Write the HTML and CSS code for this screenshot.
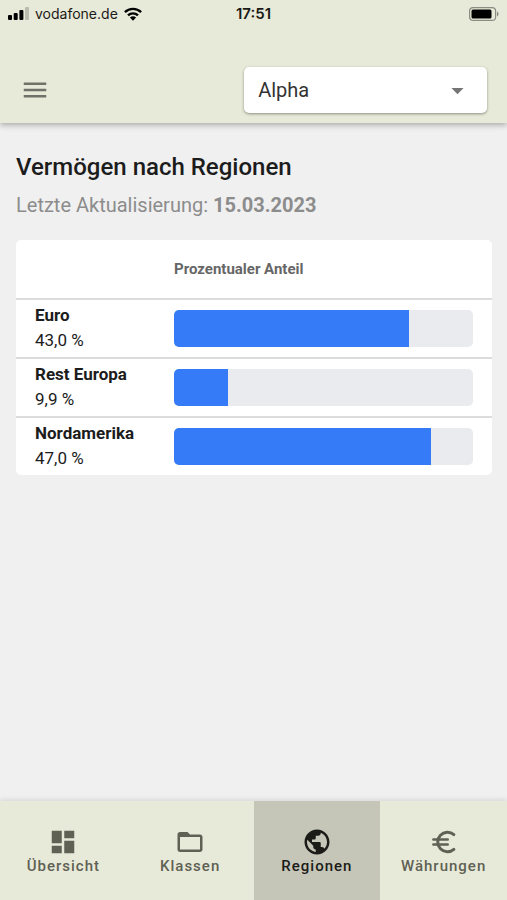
FILE: index.html
```html
<!DOCTYPE html>
<html lang="de">
<head>
<meta charset="utf-8">
<meta name="viewport" content="width=device-width, initial-scale=1">
<title>Vermögen nach Regionen</title>
<link rel="stylesheet" href="styles.css">
</head>
<body>
<header class="top">
  <div class="status">
    <div class="carrier">
      <svg class="signal" viewBox="0 0 21 13" aria-hidden="true"><rect x="0" y="8" width="4" height="5" rx="1"/><rect x="5.7" y="6" width="4" height="7" rx="1"/><rect x="11.4" y="3" width="4" height="10" rx="1"/><rect x="17" y="0" width="4" height="13" rx="1" opacity=".2"/></svg>
      <span>vodafone.de</span>
      <svg class="wifi" viewBox="0 0 18 14" aria-hidden="true"><g fill="none" stroke="#000" stroke-width="2.4"><path d="M.9 5.2a11.6 11.6 0 0 1 16.2 0"/><path d="M4 8.4a7.2 7.2 0 0 1 10 0"/></g><path d="M9 13.8 5.9 10.6a4.5 4.5 0 0 1 6.2 0z"/></svg>
    </div>
    <span class="time">17:51</span>
    <svg class="battery" viewBox="0 0 30 14" aria-hidden="true"><rect x=".6" y=".6" width="26" height="12.8" rx="3.5" fill="none" stroke="#000" stroke-opacity=".4" stroke-width="1.2"/><rect x="2.5" y="2.5" width="20" height="9" rx="1.5"/><path d="M28 4.500c2 .8 2 4.200 0 5z" opacity=".4"/></svg>
  </div>
  <div class="toolbar">
    <button class="menu" type="button" aria-label="Menü"><svg class="icon" viewBox="0 0 24 24" aria-hidden="true"><path d="M3 18h18v-2H3v2zm0-5h18v-2H3v2zm0-7v2h18V6H3z"/></svg></button>
    <div class="picker">
      <select class="select" aria-label="Portfolio"><option>Alpha</option></select>
      <svg class="arrow" viewBox="0 0 24 24" aria-hidden="true"><path d="M7 10l5 5 5-5z"/></svg>
    </div>
  </div>
</header>
<main class="content">
  <h1 class="title">Vermögen nach Regionen</h1>
  <p class="updated">Letzte Aktualisierung: <strong>15.03.2023</strong></p>
  <table class="regions">
    <thead>
      <tr><td class="label"></td><th class="share" scope="col">Prozentualer Anteil</th></tr>
    </thead>
    <tbody>
      <tr><th class="label" scope="row">Euro<span class="value">43,0 %</span></th><td class="share"><div class="track"><div class="fill" style="width:78.7%"></div></div></td></tr>
      <tr><th class="label" scope="row">Rest Europa<span class="value">9,9 %</span></th><td class="share"><div class="track"><div class="fill" style="width:18.1%"></div></div></td></tr>
      <tr><th class="label" scope="row">Nordamerika<span class="value">47,0 %</span></th><td class="share"><div class="track"><div class="fill" style="width:86%"></div></div></td></tr>
    </tbody>
  </table>
</main>
<nav class="tabs">
  <a class="tab" href="#uebersicht"><svg class="icon" viewBox="0 0 24 24" aria-hidden="true"><path d="M3 13h8V3H3v10zm0 8h8v-6H3v6zm10 0h8V11h-8v10zm0-18v6h8V3h-8z"/></svg>Übersicht</a>
  <a class="tab" href="#klassen"><svg class="icon" viewBox="0 0 24 24" aria-hidden="true"><path d="M20 6h-8l-2-2H4c-1.1 0-1.99.9-1.99 2L2 18c0 1.1.9 2 2 2h16c1.1 0 2-.9 2-2V8c0-1.1-.9-2-2-2zm0 12H4V8h16v10z"/></svg>Klassen</a>
  <a class="tab active" href="#regionen" aria-current="page"><svg class="icon" viewBox="0 0 24 24" aria-hidden="true"><path d="M12 2C6.48 2 2 6.48 2 12s4.48 10 10 10 10-4.48 10-10S17.52 2 12 2zm-1 17.93c-3.95-.49-7-3.85-7-7.93 0-.62.08-1.21.21-1.79L9 15v1c0 1.1.9 2 2 2v1.93zm6.9-2.54c-.26-.81-1-1.39-1.9-1.39h-1v-3c0-.55-.45-1-1-1H8v-2h2c.55 0 1-.45 1-1V7h2c1.1 0 2-.9 2-2v-.41c2.93 1.19 5 4.06 5 7.41 0 2.08-.8 3.97-2.1 5.39z"/></svg>Regionen</a>
  <a class="tab" href="#waehrungen"><svg class="icon" viewBox="0 0 24 24" aria-hidden="true"><g fill="none" stroke="currentColor" stroke-linecap="round"><path stroke-width="2.4" d="M19.9 6.100A7.800 7.800 0 1 0 19.900 17.900"/><path stroke-width="2" d="M3.500 10H15M3.500 14H15"/></g></svg>Währungen</a>
</nav>
</body>
</html>
```
FILE: styles.css
```css
* { box-sizing: border-box; }
body {
  margin: 0;
  min-height: 100vh;
  display: flex;
  flex-direction: column;
  background: #f0f0f0;
  color: #1c1c1c;
  font-family: Roboto, "Liberation Sans", sans-serif;
}
.top {
  background: #e8ead9;
  padding-bottom: 10px;
  box-shadow: 0 2px 6px rgba(0, 0, 0, .3);
}
.status {
  display: grid;
  grid-template-columns: 1fr auto 1fr;
  align-items: center;
  height: 27px;
  padding: 0 8px;
  font-family: Inter, "Liberation Sans", sans-serif;
  font-size: 14px;
  color: #1a1a16;
}
.carrier { display: flex; align-items: center; gap: 6px; }
.signal { width: 21px; height: 13px; }
.wifi { width: 18px; height: 14px; }
.time { font-size: 15px; font-weight: 600; }
.battery { width: 30px; height: 14px; justify-self: end; }
.toolbar {
  display: flex;
  justify-content: space-between;
  align-items: center;
  padding: 40px 20px 0;
}
.menu {
  display: flex;
  border: 0;
  padding: 0;
  background: none;
  color: #70726a;
}
.icon { width: 30px; height: 30px; fill: currentColor; }
.picker { position: relative; width: 52%; }
.select {
  appearance: none;
  display: block;
  width: 100%;
  height: 46px;
  padding: 0 48px 0 14px;
  border: 0;
  border-radius: 5px;
  background: #fff;
  box-shadow: 0 1px 3px rgba(0, 0, 0, .4);
  color: #333;
  font: 20px Roboto, "Liberation Sans", sans-serif;
}
.arrow {
  position: absolute;
  right: 15px;
  top: 9px;
  width: 29px;
  height: 29px;
  fill: #757575;
  pointer-events: none;
}
.content { flex: 1; padding: 28px 15px 0 16px; }
.title { margin: 0; font-size: 24px; line-height: 32px; font-weight: 500; }
.updated { margin: 8px 0 20px; font-size: 20px; line-height: 29px; color: #8c8c8c; }
.updated strong { font-weight: 700; }
.regions {
  width: 100%;
  table-layout: fixed;
  border-collapse: separate;
  border-spacing: 0;
  border-radius: 5px;
  background: #fff;
}
.regions th, .regions td {
  height: 59px;
  padding: 0;
  text-align: left;
  vertical-align: middle;
}
.regions thead th, .regions thead td { height: 58px; }
.regions tbody th, .regions tbody td { border-top: 2px solid #dcdcdc; }
.regions .label {
  width: 158px;
  padding-left: 19px;
  padding-bottom: 2px;
  font-size: 17px;
  line-height: 25px;
  font-weight: 700;
}
.regions .share { padding-right: 19px; }
.regions thead .share { font-size: 15px; font-weight: 700; color: #666; }
.value { display: block; font-weight: 400; }
.track {
  height: 37px;
  overflow: hidden;
  border-radius: 5px;
  background: #e9ebee;
}
.fill { height: 100%; background: #357af6; }
.tabs {
  display: grid;
  grid-template-columns: repeat(4, 1fr);
  background: #e8ead9;
  box-shadow: 0 -1px 5px rgba(0, 0, 0, .12);
}
.tab {
  display: flex;
  flex-direction: column;
  align-items: center;
  padding: 26px 0 24px;
  color: #5f6154;
  font-size: 15px;
  line-height: 19px;
  font-weight: 500;
  letter-spacing: 1px;
  text-decoration: none;
}
.active { background: #c5c6b8; color: #1b1c18; }
```
